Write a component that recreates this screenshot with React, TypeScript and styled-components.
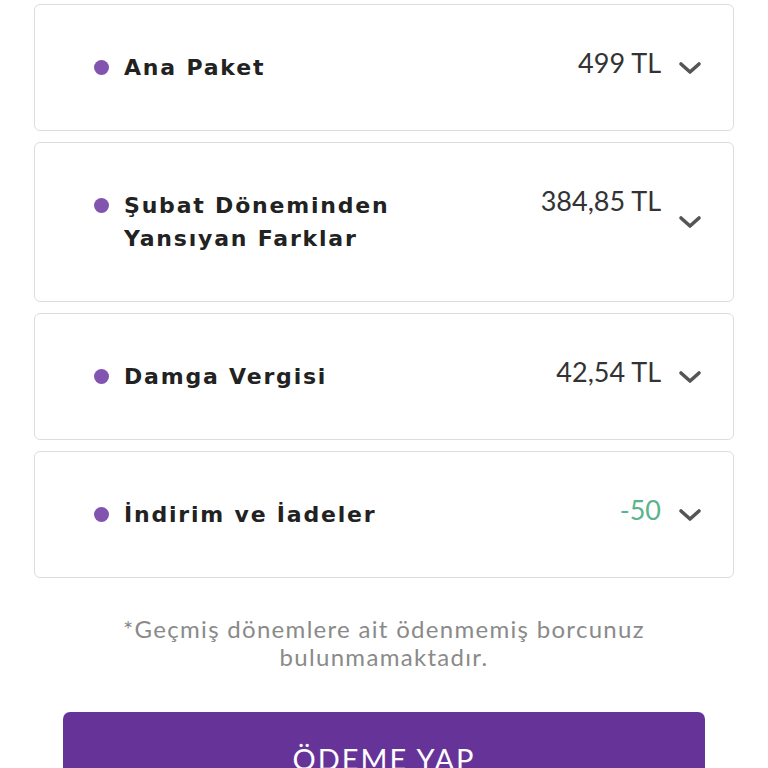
import React from "react";
import styled, { createGlobalStyle } from "styled-components";

const GlobalStyle = createGlobalStyle`
  html, body {
    margin: 0;
    padding: 0;
    background: #ffffff;
  }
  body {
    font-family: Lato, "Noto Sans", sans-serif;
    overflow: hidden;
  }
`;

const Page = styled.div`
  width: 768px;
  height: 768px;
  box-sizing: border-box;
  padding: 4px 34px 0;
  display: flex;
  flex-direction: column;
  overflow: hidden;
`;

const List = styled.div`
  display: flex;
  flex-direction: column;
  gap: 11px;
`;

const Card = styled.div`
  display: flex;
  align-items: center;
  box-sizing: border-box;
  padding: 46px 31px 46px 59px;
  border: 1.5px solid #dddddd;
  border-radius: 6px;
  background: #fff;
`;

const Row = styled.div`
  flex: 1;
  display: flex;
  align-items: flex-start;
`;

const Label = styled.div`
  flex: 1;
  display: flex;
  align-items: flex-start;
  gap: 15px;
`;

const Dot = styled.span`
  flex: none;
  width: 15px;
  height: 15px;
  margin-top: 9px;
  border-radius: 50%;
  background: #8254b0;
`;

const Title = styled.div`
  font-family: "DejaVu Sans", sans-serif;
  font-weight: 700;
  font-size: 22px;
  line-height: 33px;
  letter-spacing: 1.8px;
  color: #222222;
`;

const Amount = styled.div<{ $positive?: boolean }>`
  font-family: Lato, sans-serif;
  font-size: 27px;
  line-height: 33px;
  color: ${(p) => (p.$positive ? "#5cb48c" : "#333333")};
  margin-top: -5px;
`;

const Chevron = styled.svg`
  flex: none;
  width: 24px;
  height: 14px;
  margin-left: 17px;
`;

const Note = styled.p`
  margin: 37px 0 0;
  text-align: center;
  font-family: Lato, sans-serif;
  font-size: 24px;
  line-height: 28px;
  letter-spacing: 1.3px;
  color: #8a8a8a;
`;

const PayButton = styled.button`
  margin: 41px 29px 0;
  height: 90px;
  padding: 29px 0 0;
  display: flex;
  justify-content: center;
  align-items: flex-start;
  border: none;
  border-radius: 7px;
  background: #663399;
  color: #ffffff;
  font-family: Lato, sans-serif;
  font-size: 29px;
  letter-spacing: 2px;
  flex: none;
`;

const items = [
  { title: ["Ana Paket"], amount: "499 TL" },
  { title: ["Şubat Döneminden", "Yansıyan Farklar"], amount: "384,85 TL" },
  { title: ["Damga Vergisi"], amount: "42,54 TL" },
  { title: ["İndirim ve İadeler"], amount: "-50", positive: true },
];

const ChevronIcon = () => (
  <Chevron viewBox="0 0 24 14">
    <path
      d="M3 3l9 8 9-8"
      fill="none"
      stroke="#555555"
      strokeWidth="3.6"
      strokeLinecap="round"
      strokeLinejoin="round"
    />
  </Chevron>
);

export default function App() {
  return (
    <>
      <GlobalStyle />
      <Page>
        <List>
          {items.map((item) => (
            <Card key={item.amount}>
              <Row>
                <Label>
                  <Dot />
                  <Title>
                    {item.title.map((line) => (
                      <div key={line}>{line}</div>
                    ))}
                  </Title>
                </Label>
                <Amount $positive={item.positive}>{item.amount}</Amount>
              </Row>
              <ChevronIcon />
            </Card>
          ))}
        </List>
        <Note>
          *Geçmiş dönemlere ait ödenmemiş borcunuz
          <br />
          bulunmamaktadır.
        </Note>
        <PayButton>ÖDEME YAP</PayButton>
      </Page>
    </>
  );
}
